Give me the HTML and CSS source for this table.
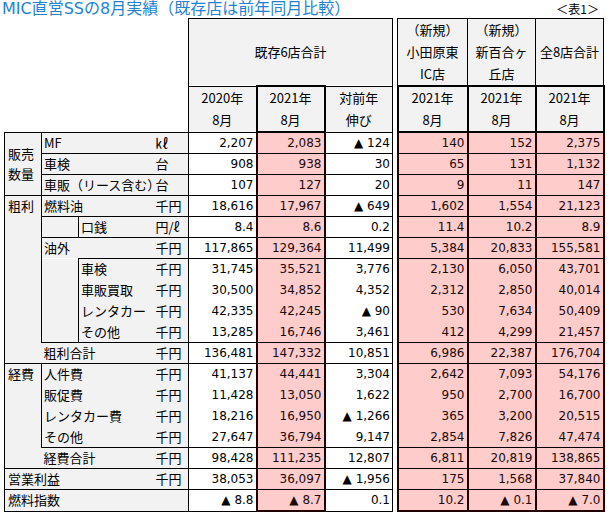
FILE: index.html
```html
<!DOCTYPE html>
<html lang="ja">
<head>
<meta charset="utf-8">
<title>MIC直営SSの8月実績</title>
<link rel="stylesheet" href="styles.css">
</head>
<body>
<div class="sheet">
  <div class="title-row">
    <h1 class="title">MIC直営SSの8月実績（既存店は前年同月比較）</h1>
    <span class="tag">＜表1＞</span>
  </div>
  <table class="report">
    <colgroup>
      <col class="w37"><col class="w37"><col class="w75"><col class="w35">
      <col class="w68"><col class="w68"><col class="w68"><col class="w5">
      <col class="w70"><col class="w68"><col class="w68">
    </colgroup>
    <tr class="h1">
      <td colspan="4" rowspan="2" class="blank"></td>
      <td colspan="3" class="hd">既存6店合計</td>
      <td rowspan="2" class="gap"></td>
      <td class="hd">（新規）<br>小田原東<br>IC店</td>
      <td class="hd">（新規）<br>新百合ヶ<br>丘店</td>
      <td class="hd">全8店合計</td>
    </tr>
    <tr class="h2">
      <td class="hd">2020年<br>8月</td>
      <td class="hd thick">2021年<br>8月</td>
      <td class="hd">対前年<br>伸び</td>
      <td class="hd thick">2021年<br>8月</td>
      <td class="hd thick">2021年<br>8月</td>
      <td class="hd thick">2021年<br>8月</td>
    </tr>

    <tr class="d rt">
      <td rowspan="3" class="lab grp bl br bb">販売<br>数量</td>
      <td colspan="2" class="lab bl">MF</td><td class="lab unit">㎘</td>
      <td class="n">2,207</td><td class="p">2,083</td><td class="n">▲ 124</td><td class="gap"></td>
      <td class="q">140</td><td class="q">152</td><td class="q">2,375</td>
    </tr>
    <tr class="d rt">
      <td colspan="2" class="lab bl">車検</td><td class="lab unit">台</td>
      <td class="n">908</td><td class="p">938</td><td class="n">30</td><td class="gap"></td>
      <td class="q">65</td><td class="q">131</td><td class="q">1,132</td>
    </tr>
    <tr class="d rt">
      <td colspan="2" class="lab bl">車販（リース含む）</td><td class="lab unit">台</td>
      <td class="n">107</td><td class="p">127</td><td class="n">20</td><td class="gap"></td>
      <td class="q">9</td><td class="q">11</td><td class="q">147</td>
    </tr>
    <tr class="d rt">
      <td rowspan="7" class="lab grp top bl br">粗利</td>
      <td colspan="2" class="lab bl">燃料油</td><td class="lab unit">千円</td>
      <td class="n">18,616</td><td class="p">17,967</td><td class="n">▲ 649</td><td class="gap"></td>
      <td class="q">1,602</td><td class="q">1,554</td><td class="q">21,123</td>
    </tr>
    <tr class="d rt">
      <td class="lab"></td><td class="lab bl">口銭</td><td class="lab unit">円/ℓ</td>
      <td class="n">8.4</td><td class="p">8.6</td><td class="n">0.2</td><td class="gap"></td>
      <td class="q">11.4</td><td class="q">10.2</td><td class="q">8.9</td>
    </tr>
    <tr class="d rt">
      <td colspan="2" class="lab">油外</td><td class="lab unit">千円</td>
      <td class="n">117,865</td><td class="p">129,364</td><td class="n">11,499</td><td class="gap"></td>
      <td class="q">5,384</td><td class="q">20,833</td><td class="q">155,581</td>
    </tr>
    <tr class="d rt">
      <td rowspan="4" class="lab nt"></td>
      <td class="lab bl">車検</td><td class="lab unit">千円</td>
      <td class="n">31,745</td><td class="p">35,521</td><td class="n">3,776</td><td class="gap"></td>
      <td class="q">2,130</td><td class="q">6,050</td><td class="q">43,701</td>
    </tr>
    <tr class="d">
      <td class="lab bl">車販買取</td><td class="lab unit">千円</td>
      <td class="n">30,500</td><td class="p">34,852</td><td class="n">4,352</td><td class="gap"></td>
      <td class="q">2,312</td><td class="q">2,850</td><td class="q">40,014</td>
    </tr>
    <tr class="d">
      <td class="lab bl">レンタカー</td><td class="lab unit">千円</td>
      <td class="n">42,335</td><td class="p">42,245</td><td class="n">▲ 90</td><td class="gap"></td>
      <td class="q">530</td><td class="q">7,634</td><td class="q">50,409</td>
    </tr>
    <tr class="d">
      <td class="lab bl">その他</td><td class="lab unit">千円</td>
      <td class="n">13,285</td><td class="p">16,746</td><td class="n">3,461</td><td class="gap"></td>
      <td class="q">412</td><td class="q">4,299</td><td class="q">21,457</td>
    </tr>
    <tr class="d rt">
      <td class="lab bl nt"></td>
      <td colspan="2" class="lab">粗利合計</td><td class="lab unit">千円</td>
      <td class="n">136,481</td><td class="p">147,332</td><td class="n">10,851</td><td class="gap"></td>
      <td class="q">6,986</td><td class="q">22,387</td><td class="q">176,704</td>
    </tr>
    <tr class="d rt">
      <td rowspan="4" class="lab grp top bl br">経費</td>
      <td colspan="2" class="lab bl">人件費</td><td class="lab unit">千円</td>
      <td class="n">41,137</td><td class="p">44,441</td><td class="n">3,304</td><td class="gap"></td>
      <td class="q">2,642</td><td class="q">7,093</td><td class="q">54,176</td>
    </tr>
    <tr class="d">
      <td colspan="2" class="lab bl">販促費</td><td class="lab unit">千円</td>
      <td class="n">11,428</td><td class="p">13,050</td><td class="n">1,622</td><td class="gap"></td>
      <td class="q">950</td><td class="q">2,700</td><td class="q">16,700</td>
    </tr>
    <tr class="d">
      <td colspan="2" class="lab bl">レンタカー費</td><td class="lab unit">千円</td>
      <td class="n">18,216</td><td class="p">16,950</td><td class="n">▲ 1,266</td><td class="gap"></td>
      <td class="q">365</td><td class="q">3,200</td><td class="q">20,515</td>
    </tr>
    <tr class="d">
      <td colspan="2" class="lab bl">その他</td><td class="lab unit">千円</td>
      <td class="n">27,647</td><td class="p">36,794</td><td class="n">9,147</td><td class="gap"></td>
      <td class="q">2,854</td><td class="q">7,826</td><td class="q">47,474</td>
    </tr>
    <tr class="d rt">
      <td class="lab bl nt"></td>
      <td colspan="2" class="lab">経費合計</td><td class="lab unit">千円</td>
      <td class="n">98,428</td><td class="p">111,235</td><td class="n">12,807</td><td class="gap"></td>
      <td class="q">6,811</td><td class="q">20,819</td><td class="q">138,865</td>
    </tr>
    <tr class="d rt">
      <td colspan="3" class="lab grp bl">営業利益</td><td class="lab unit">千円</td>
      <td class="n">38,053</td><td class="p">36,097</td><td class="n">▲ 1,956</td><td class="gap"></td>
      <td class="q">175</td><td class="q">1,568</td><td class="q">37,840</td>
    </tr>
    <tr class="d rt last">
      <td colspan="4" class="lab grp bl">燃料指数</td>
      <td class="n">▲ 8.8</td><td class="p">▲ 8.7</td><td class="n">0.1</td><td class="gap"></td>
      <td class="q">10.2</td><td class="q">▲ 0.1</td><td class="q">▲ 7.0</td>
    </tr>
  </table>
</div>
</body>
</html>
```

FILE: styles.css
```css
* { box-sizing: border-box; }

body {
  margin: 0;
  background: #ffffff;
  color: #000000;
  font-family: "Noto Sans CJK JP", "Noto Sans", sans-serif;
}

.sheet {
  width: 607px;
  padding-left: 4px;
}

.title-row {
  display: flex;
  justify-content: space-between;
  align-items: center;
  height: 18px;
  padding-right: 8px;
}

.title {
  margin: 0 0 0 -2px;
  font-family: "DejaVu Sans", "Noto Sans CJK JP", sans-serif;
  font-weight: normal;
  font-size: 16px;
  line-height: 18px;
  color: #1f82d2;
  white-space: nowrap;
}

.tag {
  font-size: 12px;
  line-height: 18px;
}

.report {
  border-collapse: collapse;
  table-layout: fixed;
  width: 599px;
}

.w37 { width: 37px; }
.w75 { width: 75px; }
.w35 { width: 35px; }
.w68 { width: 68px; }
.w70 { width: 70px; }
.w5 { width: 5px; }

.report td {
  padding: 0;
  font-size: 13px;
  line-height: 20px;
  white-space: nowrap;
  overflow: hidden;
}

.h1 { height: 67px; }
.h2 { height: 44px; }
.d { height: 21px; }

.hd {
  background: #f2f2f2;
  border: 1px solid #000;
  text-align: center;
  vertical-align: middle;
  line-height: 22px !important;
}

.hd.thick { border: 2px solid #000; }

.blank { background: #fff; }
.gap { background: #fff; }

.lab {
  background: #f2f2f2;
  padding-left: 2px !important;
  text-align: left;
}

.lab.grp { padding-left: 3px !important; }
.lab.unit { padding-left: 2px !important; }
.lab.top { vertical-align: top; }

.bl { border-left: 1px solid #000; }
.br { border-right: 1px solid #000; }
.bb { border-bottom: 1px solid #000; }

.n, .p, .q {
  font-family: "DejaVu Sans", "Noto Sans CJK JP", sans-serif;
  font-size: 12px !important;
  text-align: right;
  padding-right: 2px !important;
}

.n {
  background: #fff;
  border-left: 1px solid #000;
  border-right: 1px solid #000;
}

.p, .q {
  background: #ffcccc;
  color: #1a0a0a;
  border-left: 2px solid #200000;
  border-right: 2px solid #200000;
}

.report .rt td { border-top: 1px solid #000; }
.report .rt td.gap,
.report .rt td.nt { border-top: none; }

.report .last td { border-bottom: 1px solid #000; }
.report .last td.p,
.report .last td.q { border-bottom: 2px solid #200000; }
.report .last td.gap { border-bottom: none; }
```
